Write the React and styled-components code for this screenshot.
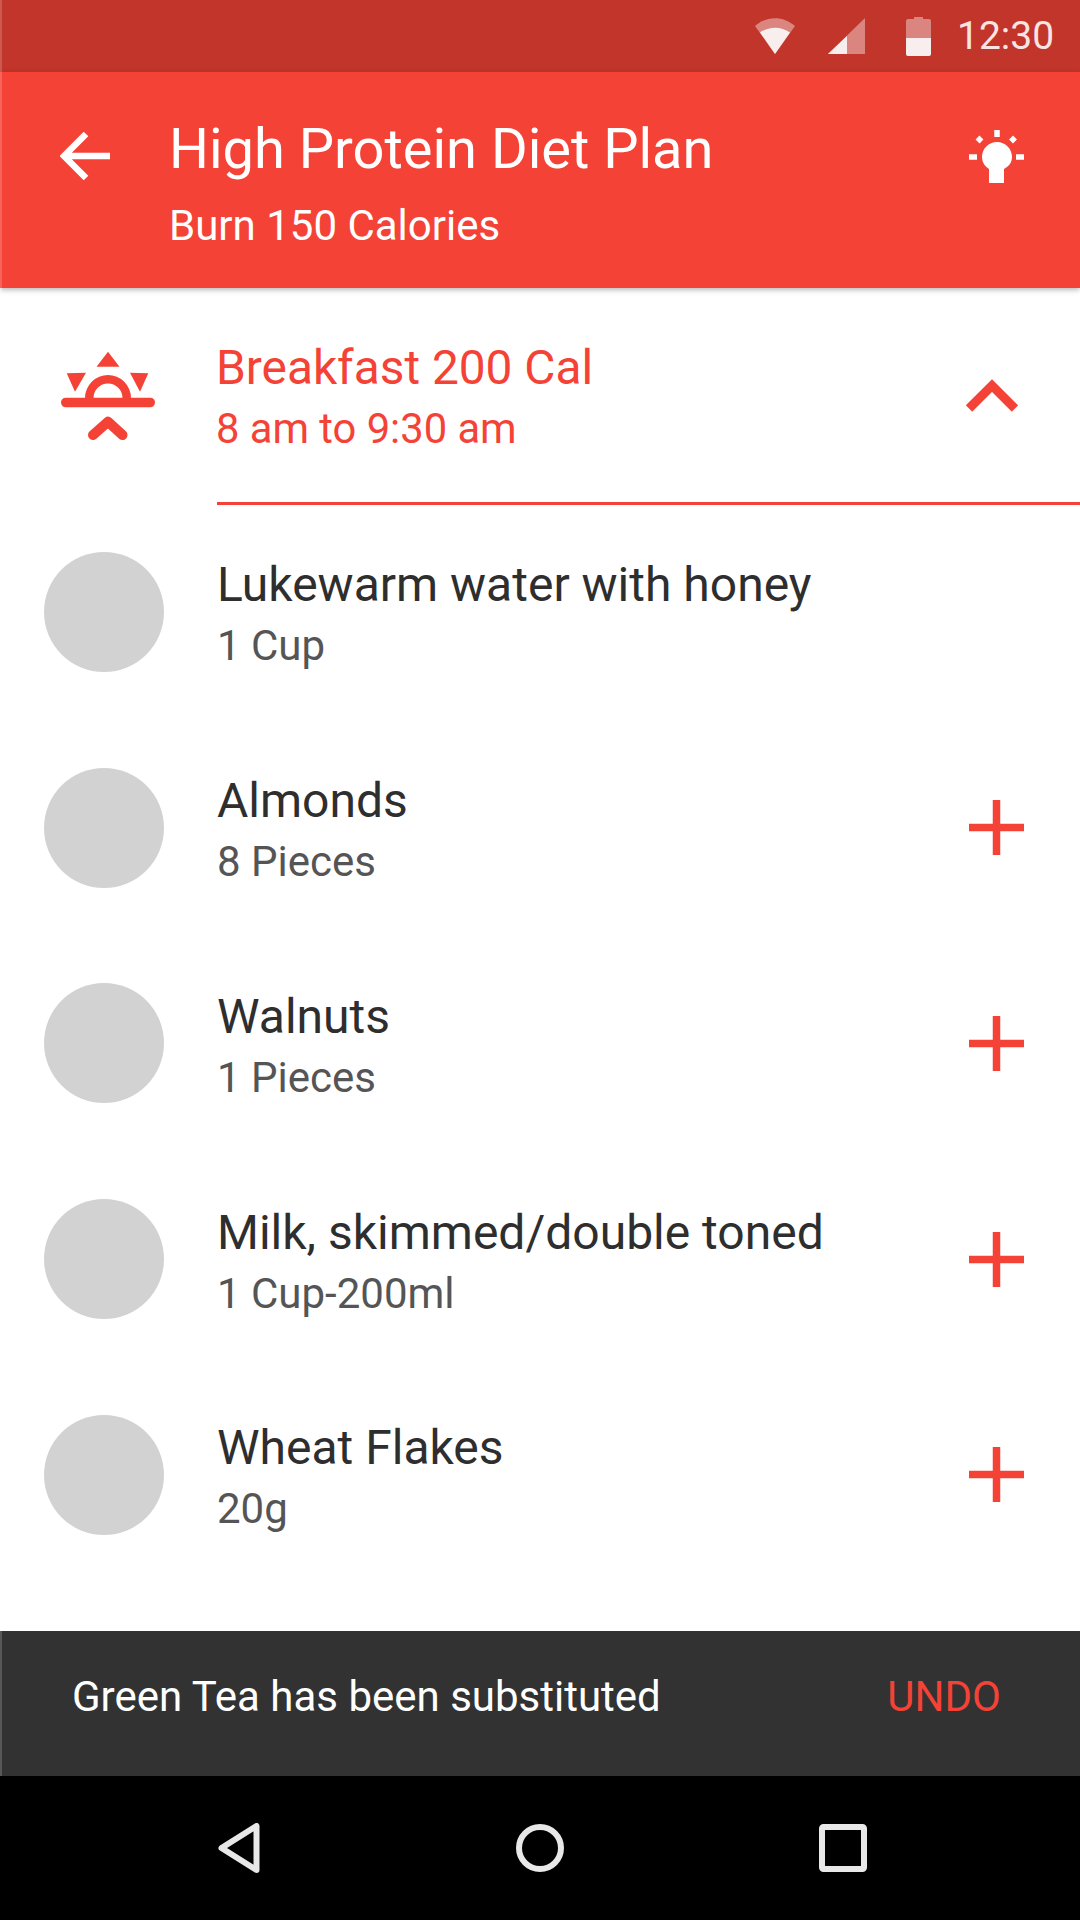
import React from 'react';
import styled, { createGlobalStyle } from 'styled-components';

const RED = '#f44336';

const GlobalStyle = createGlobalStyle`
  html, body {
    margin: 0;
    padding: 0;
    background: #fff;
  }
  * {
    box-sizing: border-box;
  }
`;

const Root = styled.div`
  width: 1080px;
  height: 1920px;
  display: flex;
  flex-direction: column;
  overflow: hidden;
  font-family: Roboto, "Liberation Sans", sans-serif;
  background: #fff;
  position: relative;

  /* faint light edge down the left side of the capture */
  &::after {
    content: '';
    position: absolute;
    left: 0;
    top: 0;
    width: 2px;
    height: 1776px;
    background: rgba(255, 255, 255, 0.18);
    z-index: 2;
  }
`;

const StatusBar = styled.div`
  height: 72px;
  flex: none;
  background: #c1352a;
  display: flex;
  align-items: center;
  padding: 0 0 0 755px;
`;

const StatusIcon = styled.svg`
  display: block;
  flex: none;
  margin-right: ${(p) => p.$gap}px;
`;

const Clock = styled.span`
  color: #f8e4e2;
  font-size: 39px;
  line-height: 72px;
  white-space: nowrap;
`;

const Header = styled.header`
  height: 216px;
  flex: none;
  background: ${RED};
  display: flex;
  align-items: flex-start;
  padding-left: 60px;
  box-shadow: 0 2px 5px rgba(0, 0, 0, 0.28);
  position: relative;
  z-index: 1;
`;

const BackIcon = styled.svg`
  flex: none;
  margin: 60px 59px 0 0;
`;

const HeaderText = styled.div`
  flex: 1;
  padding-top: 41px;
`;

const Title = styled.div`
  color: #fff;
  font-size: 56px;
  line-height: 72px;
`;

const Subtitle = styled.div`
  color: #fff;
  font-size: 42px;
  line-height: 48px;
  margin-top: 17px;
`;

const BulbIcon = styled.svg`
  flex: none;
  margin: 57px 56px 0 0;
`;

const Content = styled.main`
  flex: 1;
  min-height: 0;
`;

const Section = styled.div`
  height: 217px;
  display: flex;
  align-items: flex-start;
`;

const SunIcon = styled.svg`
  flex: none;
  margin: 60px 60px 0 60px;
`;

const SectionText = styled.div`
  flex: 1;
  height: 217px;
  border-bottom: 3px solid ${RED};
  padding-top: 53px;
  display: flex;
  justify-content: space-between;
  align-items: flex-start;
`;

const SectionLabel = styled.div`
  margin-left: -1px;
`;

const SectionTitle = styled.div`
  color: ${RED};
  font-size: 47.8px;
  line-height: 54px;
`;

const SectionTime = styled.div`
  color: ${RED};
  font-size: 41.7px;
  line-height: 48px;
  margin-top: 10px;
`;

const Chevron = styled.svg`
  flex: none;
  margin: 37px 60px 0 0;
`;

const Item = styled.div`
  height: 215.75px;
  display: flex;
  align-items: center;
  padding: 0 0 2px 44px;
`;

const Thumb = styled.div`
  width: 120px;
  height: 120px;
  border-radius: 50%;
  background: #d2d2d2;
  flex: none;
  margin-right: 53px;
`;

const ItemText = styled.div`
  flex: 1;
  padding-top: 4px;
`;

const ItemName = styled.div`
  color: #2e2e2e;
  font-size: 48px;
  line-height: 56px;
`;

const ItemQty = styled.div`
  color: #555;
  font-size: 42px;
  line-height: 48px;
  margin-top: 9px;
`;

const PlusIcon = styled.svg`
  flex: none;
  margin-right: 56px;
`;

const Snackbar = styled.div`
  height: 145px;
  flex: none;
  background: #323232;
  display: flex;
  align-items: center;
  justify-content: space-between;
  padding: 0 79px 14px 72px;
`;

const SnackText = styled.span`
  color: #fff;
  font-size: 42px;
`;

const SnackAction = styled.span`
  color: ${RED};
  font-size: 42px;
`;

const NavBar = styled.nav`
  height: 144px;
  flex: none;
  background: #000;
  display: flex;
  align-items: center;
  justify-content: space-between;
  padding: 0 213px 0 218px;
`;

const items = [
  { name: 'Lukewarm water with honey', qty: '1 Cup' },
  { name: 'Almonds', qty: '8 Pieces', add: true },
  { name: 'Walnuts', qty: '1 Pieces', add: true },
  { name: 'Milk, skimmed/double toned', qty: '1 Cup-200ml', add: true },
  { name: 'Wheat Flakes', qty: '20g', add: true },
];

function Plus() {
  return (
    <PlusIcon width="55" height="55" viewBox="0 0 55 55">
      <path d="M27.5 0V55M0 27.5H55" stroke={RED} strokeWidth="7.5" fill="none" />
    </PlusIcon>
  );
}

export default function App() {
  return (
    <Root>
      <GlobalStyle />
      <StatusBar>
        <StatusIcon $gap={33} width="40" height="36" viewBox="0 0 40 36">
          <path d="M0 8C12 -2.500 28 -2.500 40 8L20 36Z" fill="#fff" opacity="0.4" />
          <path d="M5 14.500C14 8 26 8 35 14.500L20 36Z" fill="#f8eeed" />
        </StatusIcon>
        <StatusIcon $gap={41} width="37" height="36" viewBox="0 0 37 36">
          <path d="M37 0V36H0Z" fill="#fff" opacity="0.4" />
          <path d="M19 18V36H0Z" fill="#f8eeed" />
        </StatusIcon>
        <StatusIcon $gap={26} width="25" height="39" viewBox="0 0 25 39">
          <path d="M8 0H17V2H23Q25 2 25 4V21H0V4Q0 2 2 2H8Z" fill="#fff" opacity="0.4" />
          <path d="M0 21H25V37Q25 39 23 39H2Q0 39 0 37Z" fill="#f8eeed" />
        </StatusIcon>
        <Clock>12:30</Clock>
      </StatusBar>
      <Header>
        <BackIcon width="50" height="48" viewBox="0 0 50 48">
          <path d="M50 24H5M26 2L4 24L26 46" stroke="#fff" strokeWidth="6.500" fill="none" />
        </BackIcon>
        <HeaderText>
          <Title>High Protein Diet Plan</Title>
          <Subtitle>Burn 150 Calories</Subtitle>
        </HeaderText>
        <BulbIcon width="55" height="55" viewBox="0 0 55 55">
          <path
            d="M28 13C19.700 13 13 19.700 13 28C13 33 15.500 37 20 40V54H35V40C40.500 37 43 33 43 28C43 19.700 36.300 13 28 13Z"
            fill="#fff"
          />
          <path
            d="M28 1V8M8.500 8.500L12.500 12.500M46 8.500L42 12.500M0 28H8M47 28H55"
            stroke="#fff"
            strokeWidth="5.500"
            fill="none"
          />
        </BulbIcon>
      </Header>
      <Content>
        <Section>
          <SunIcon width="97" height="93" viewBox="0 0 97 93">
            <path d="M48 3.700L59.500 18.700H36.500Z" fill={RED} />
            <path d="M6.700 25.300L26 24.700L15 43.700Z" fill={RED} />
            <path d="M88.300 25.300L70 24.700L80 43.700Z" fill={RED} />
            <path d="M25 50A23 23 0 0 1 71 50H62.500A14.500 14.500 0 0 0 33.500 50Z" fill={RED} />
            <rect x="1" y="49.700" width="94" height="9.600" rx="4.800" fill={RED} />
            <path d="M33 87L48 73.700L62.500 87" stroke={RED} strokeWidth="10" strokeLinecap="round" strokeLinejoin="round" fill="none" />
          </SunIcon>
          <SectionText>
            <SectionLabel>
              <SectionTitle>Breakfast 200 Cal</SectionTitle>
              <SectionTime>8 am to 9:30 am</SectionTime>
            </SectionLabel>
            <Chevron width="56" height="36" viewBox="0 0 56 36">
              <path d="M5 30.500L28 7.500L51 30.500" stroke={RED} strokeWidth="9" fill="none" />
            </Chevron>
          </SectionText>
        </Section>
        {items.map((item) => (
          <Item key={item.name}>
            <Thumb />
            <ItemText>
              <ItemName>{item.name}</ItemName>
              <ItemQty>{item.qty}</ItemQty>
            </ItemText>
            {item.add && <Plus />}
          </Item>
        ))}
      </Content>
      <Snackbar>
        <SnackText>Green Tea has been substituted</SnackText>
        <SnackAction>UNDO</SnackAction>
      </Snackbar>
      <NavBar>
        <svg width="42" height="50" viewBox="0 0 42 50">
          <path d="M38.500 3V47L3.500 25Z" stroke="#e8e8e8" strokeWidth="6" strokeLinejoin="round" fill="none" />
        </svg>
        <svg width="48" height="48" viewBox="0 0 48 48">
          <circle cx="24" cy="24" r="21" stroke="#e8e8e8" strokeWidth="6" fill="none" />
        </svg>
        <svg width="48" height="48" viewBox="0 0 48 48">
          <rect x="3" y="3" width="42" height="42" rx="1.500" stroke="#e8e8e8" strokeWidth="6" fill="none" />
        </svg>
      </NavBar>
    </Root>
  );
}
